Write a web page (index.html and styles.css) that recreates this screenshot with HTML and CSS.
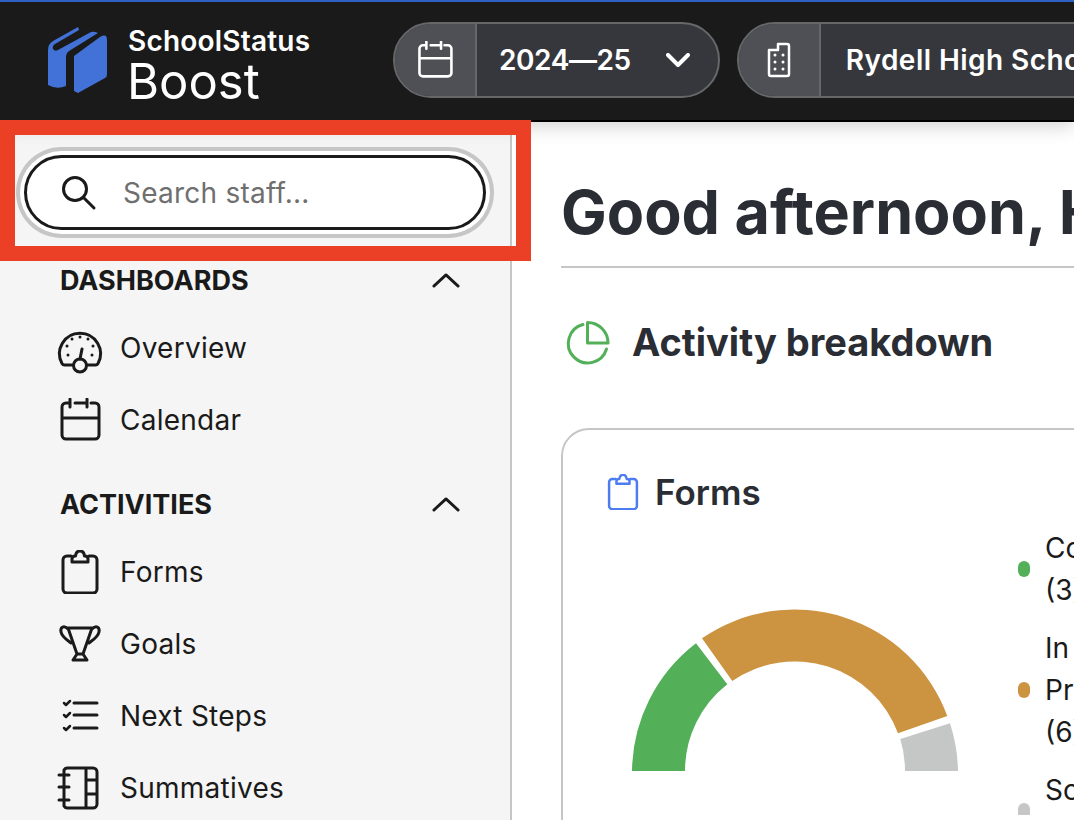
FILE: index.html
```html
<!DOCTYPE html>
<html lang="en">
<head>
  <meta charset="utf-8">
  <title>SchoolStatus Boost</title>
  <link rel="stylesheet" href="styles.css">
</head>
<body>
  <!-- shared icons -->
  <svg class="icon-defs" aria-hidden="true">
    <symbol id="i-calendar" viewBox="0 0 44 44">
      <path d="M12 5H8a4 4 0 0 0-4 4v28a4 4 0 0 0 4 4h29a4 4 0 0 0 4-4V9a4 4 0 0 0-4-4h-4M12 1v8M29 1v8M17 5h12M4 20h37"/>
    </symbol>
    <symbol id="i-clipboard" viewBox="0 0 44 44">
      <path d="M13 6H9a4 4 0 0 0-4 4v29a4 4 0 0 0 4 4h26a4 4 0 0 0 4-4V10a4 4 0 0 0-4-4h-4"/>
      <path d="M14 12h16V9q0-3-3-3h-.5C26 2 24.500 1 22 1s-4 1-4.500 5H17q-3 0-3 3z"/>
    </symbol>
  </svg>

  <header class="topbar">
    <div class="brand">
      <svg class="brand-mark" viewBox="0 0 60 66">
        <path class="book" d="M30 0 5 14Q0 17 0 23v35q9 5 18 1V29q0-3 3-5L50 6q-4-2-7-1L10 23q-3 2-5-1-1-3 2-5L31 3z"/>
        <path class="book" d="M26 29 52 10q7-4 7 3v34q0 3-2 4L30 66l-4-2z"/>
      </svg>
      <div class="brand-text">
        <span class="brand-org">SchoolStatus</span>
        <span class="brand-name">Boost</span>
      </div>
    </div>

    <div class="pill">
      <span class="pill-icon">
        <svg class="ico ico-white ico-38"><use href="#i-calendar"/></svg>
      </span>
      <span class="pill-value pill-year">2024—25
        <svg class="pill-chevron" viewBox="0 0 24 14"><path d="M2 2l10 10L22 2"/></svg>
      </span>
    </div>

    <div class="pill">
      <span class="pill-icon">
        <svg class="ico ico-white ico-building" viewBox="0 0 36 36">
          <path d="M8 8h9V2h9a2 2 0 0 1 2 2v28a2 2 0 0 1-2 2H10a2 2 0 0 1-2-2z"/>
          <path class="dots" d="M14 13h.01M22 13h.01M14 20h.01M22 20h.01M14 27h.01M22 27h.01"/>
        </svg>
      </span>
      <span class="pill-value">Rydell High School</span>
    </div>
  </header>

  <div class="layout">
    <aside class="sidebar">
      <div class="search">
        <svg class="search-icon" viewBox="0 0 36 36">
          <circle cx="14" cy="14" r="11.500"/>
          <path d="M22.500 22.500 33 33"/>
        </svg>
        <span class="search-hint">Search staff...</span>
      </div>

      <nav class="nav">
        <div class="nav-head">
          <span>DASHBOARDS</span>
          <svg class="nav-caret" viewBox="0 0 30 16"><path d="M2 14 15 2l13 12"/></svg>
        </div>
        <a class="nav-item">
          <svg class="ico" viewBox="0 0 44 44">
            <path d="M15.500 39H6.500A3 3 0 0 1 4 37.500a20.500 20.500 0 1 1 36 0 3 3 0 0 1-2.500 1.500h-9"/>
            <circle cx="22" cy="39.500" r="6.500"/>
            <path d="M22 33l2-10"/>
            <path class="dots" d="M22 11h.01M14 13h.01M30 13h.01M9 20h.01M35 20h.01M10 29h.01M34 29h.01"/>
          </svg>
          Overview
        </a>
        <a class="nav-item">
          <svg class="ico"><use href="#i-calendar"/></svg>
          Calendar
        </a>

        <div class="nav-head nav-head-next">
          <span>ACTIVITIES</span>
          <svg class="nav-caret" viewBox="0 0 30 16"><path d="M2 14 15 2l13 12"/></svg>
        </div>
        <a class="nav-item">
          <svg class="ico"><use href="#i-clipboard"/></svg>
          Forms
        </a>
        <a class="nav-item">
          <svg class="ico" viewBox="0 0 44 44">
            <path d="M10 6h24M10 6l9 26M34 6l-9 26M10 7C6 3 2 5 3 10c1 5 6 8 10 11M34 7c4-4 8-2 7 3-1 5-6 8-10 11M19 32l-4 6h14l-4-6z"/>
          </svg>
          Goals
        </a>
        <a class="nav-item">
          <svg class="ico" viewBox="0 0 44 44">
            <path d="M16 9h23M16 21h23M16 34h23"/>
            <path class="checks" d="M6 9l2 2 4-4M6 21l2 2 4-4M6 34l2 2 4-4"/>
          </svg>
          Next Steps
        </a>
        <a class="nav-item">
          <svg class="ico" viewBox="0 0 44 44">
            <path d="M9 2h26a4 4 0 0 1 4 4v32a4 4 0 0 1-4 4H9a4 4 0 0 1-3-2V4a4 4 0 0 1 3-2zM28 2v40M28 14h11M28 28h11M1 9h10M1 21h10M1 34h10"/>
          </svg>
          Summatives
        </a>
      </nav>
    </aside>

    <main class="main">
      <h1 class="greeting">Good afternoon, Hannah</h1>

      <div class="section-head">
        <svg class="ico ico-green" viewBox="0 0 44 44">
          <path d="M17 3.500A19.500 19.500 0 1 0 40.500 28"/>
          <path d="M21.500 1.500A20.500 20.500 0 0 1 42 22H21.500z"/>
        </svg>
        <h2>Activity breakdown</h2>
      </div>

      <section class="card">
        <div class="card-head">
          <svg class="ico ico-blue ico-36"><use href="#i-clipboard"/></svg>
          <h3>Forms</h3>
        </div>
        <div class="card-body">
          <svg class="gauge" viewBox="630 600 330 175">
            <path class="seg-green" d="M632 771A163 163 0 0 1 696 643.300L727.300 684.300A110 110 0 0 0 685 771z"/>
            <path class="seg-orange" d="M702 638.300A163 163 0 0 1 947.300 716L898 733.300A110 110 0 0 0 732.300 681z"/>
            <path class="seg-grey" d="M950 723.300A163 163 0 0 1 958 771H905A110 110 0 0 0 900.300 739z"/>
          </svg>
          <ul class="legend">
            <li><i class="dot dot-green"></i><span>Completed (3)</span></li>
            <li><i class="dot dot-orange"></i><span>In Progress (6)</span></li>
            <li><i class="dot dot-grey"></i><span>Scheduled (1)</span></li>
          </ul>
        </div>
      </section>
    </main>
  </div>

  <!-- annotation drawn over the screenshot -->
  <div class="callout"></div>
</body>
</html>
```

FILE: styles.css
```css
/* Page */
* {
  box-sizing: border-box;
}

html, body {
  height: 100%;
}

body {
  margin: 0;
  width: 1074px;
  height: 820px;
  overflow: hidden;
  position: relative;
  background: #fff;
  color: #1a1a1a;
  font-family: Inter, "Liberation Sans", sans-serif;
}

.icon-defs {
  display: none;
}

/* Top bar */
.topbar {
  height: 122px;
  display: flex;
  align-items: center;
  padding: 0 0 2px 48px;
  background: #1a1a1a;
  border-top: 2px solid #2f60c4;
  border-bottom: 2px solid #000;
  box-shadow: 0 4px 18px rgba(0, 0, 0, 0.18);
  position: relative;
  z-index: 1;
  overflow: hidden;
}

.brand {
  display: flex;
  align-items: center;
  gap: 20px;
  width: 345px;
  flex: none;
}

.brand-mark {
  width: 60px;
  height: 66px;
  flex: none;
}

.book {
  fill: #4272d7;
}

.brand-text {
  display: flex;
  flex-direction: column;
  padding-top: 12px;
  color: #fff;
}

.brand-org {
  font-size: 28px;
  font-weight: 600;
  letter-spacing: 0.2px;
  line-height: 32px;
}

.brand-name {
  margin-left: -1px;
  font-size: 49px;
  line-height: 50px;
}

.pill {
  display: flex;
  flex: none;
  height: 76px;
  margin-right: 17px;
  border: 2px solid #666769;
  border-radius: 38px;
  background: #36373c;
  color: #fff;
  overflow: hidden;
}

.pill-icon {
  width: 82px;
  display: flex;
  align-items: center;
  justify-content: center;
  background: #4f5055;
  border-right: 2px solid #666769;
}

.pill-value {
  display: flex;
  align-items: center;
  padding: 0 28px 0 25px;
  font-size: 28px;
  font-weight: 600;
  letter-spacing: 0.45px;
  white-space: nowrap;
}

.pill-year {
  padding-left: 22px;
  letter-spacing: -0.4px;
}

.pill-chevron {
  width: 24px;
  height: 14px;
  margin-left: 35px;
  fill: none;
  stroke: #fff;
  stroke-width: 4;
  stroke-linecap: round;
  stroke-linejoin: round;
}

/* Icons */
.ico {
  width: 44px;
  height: 44px;
  flex: none;
  fill: none;
  overflow: visible;
  stroke: #1a1a1a;
  stroke-width: 3;
  stroke-linecap: round;
  stroke-linejoin: round;
}

.ico-36 {
  width: 36px;
  height: 36px;
}

.ico-38 {
  width: 38px;
  height: 38px;
}

.ico-building {
  width: 36px;
  height: 36px;
  stroke-width: 2.5;
}

.ico-white {
  stroke: #fff;
}

.ico-green {
  stroke: #53b059;
}

.ico-blue {
  stroke: #4c7cf0;
}

.dots {
  stroke-width: 3;
}

.checks {
  stroke-width: 2.5;
}

/* Layout */
.layout {
  display: flex;
  height: 698px;
}

/* Sidebar */
.sidebar {
  width: 512px;
  flex: none;
  background: #f5f5f5;
  border-right: 2px solid #c6c6c6;
}

.search {
  display: flex;
  align-items: center;
  height: 75px;
  margin: 33px 24px 0 24px;
  padding-left: 34px;
  gap: 26px;
  border: 3px solid #1a1a1a;
  border-radius: 38px;
  background: #fff;
  box-shadow: 0 0 0 4px #fff, 0 0 0 8px #c6c6c6;
}

.search-icon {
  width: 36px;
  height: 36px;
  fill: none;
  stroke: #1a1a1a;
  stroke-width: 3;
  stroke-linecap: round;
}

.search-hint {
  font-size: 28px;
  letter-spacing: 0.25px;
  color: #6f6f6f;
}

.nav {
  padding: 30px 50px 0 58px;
}

.nav-head {
  display: flex;
  align-items: center;
  justify-content: space-between;
  height: 40px;
  padding-left: 2px;
  font-size: 27px;
  font-weight: 700;
}

.nav-head-next {
  margin-top: 28px;
}

.nav-caret {
  width: 28px;
  height: 15px;
  fill: none;
  stroke: #1a1a1a;
  stroke-width: 3;
  stroke-linecap: round;
  stroke-linejoin: round;
}

.nav-item {
  display: flex;
  align-items: center;
  gap: 18px;
  height: 72px;
  font-size: 28px;
  letter-spacing: 0.25px;
  white-space: nowrap;
}

.nav-head + .nav-item {
  margin-top: 12px;
}

/* Main column */
.main {
  flex: none;
  width: 1000px;
  padding: 45px 0 0 49px;
  color: #2a2d34;
}

.greeting {
  margin: 0;
  height: 101px;
  font-size: 61px;
  font-weight: 700;
  line-height: 90px;
  white-space: nowrap;
  border-bottom: 2px solid #c6c6c6;
}

.section-head {
  display: flex;
  align-items: center;
  gap: 22px;
  height: 44px;
  margin: 53px 0 63px 5px;
}

.section-head h2 {
  margin: 0 0 3px;
  font-size: 38px;
  font-weight: 700;
}

.card {
  border: 2px solid #c6c6c6;
  border-radius: 28px;
  padding: 40px 0 0 42px;
  height: 500px;
}

.card-head {
  display: flex;
  align-items: center;
  gap: 14px;
}

.card-head h3 {
  margin: 1px 0 0;
  font-size: 35px;
  font-weight: 600;
}

.card-body {
  display: flex;
  margin-top: 14px;
}

.gauge {
  width: 330px;
  height: 175px;
  flex: none;
  margin: 73px 58px 0 25px;
}

.seg-green {
  fill: #53b059;
}

.seg-orange {
  fill: #cc9440;
}

.seg-grey {
  fill: #c5c7c6;
}

.legend {
  display: flex;
  flex-direction: column;
  gap: 16px;
  height: 288px;
  margin: 0;
  padding: 0;
  overflow: hidden;
  list-style: none;
  color: #1a1a1a;
  font-size: 28px;
  line-height: 42px;
}

.legend li {
  display: flex;
  flex: none;
  align-items: center;
  gap: 15px;
}

.legend span {
  width: min-content;
}

.dot {
  width: 12px;
  height: 16px;
  border-radius: 6px;
  flex: none;
}

.dot-green {
  background: #53b059;
}

.dot-orange {
  background: #cc9440;
}

.dot-grey {
  background: #c5c7c6;
}

/* Red annotation box */
.callout {
  position: absolute;
  left: 0;
  top: 120px;
  width: 531px;
  height: 141px;
  border: 15px solid #ec4026;
  z-index: 2;
}
```
